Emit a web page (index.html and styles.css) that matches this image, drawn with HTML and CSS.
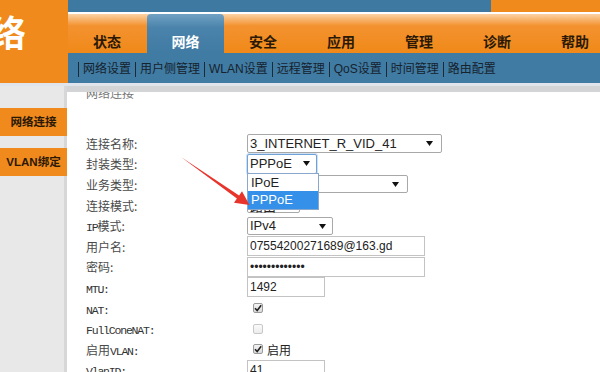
FILE: index.html
```html
<!DOCTYPE html>
<html lang="zh-CN">
<head>
    <meta charset="UTF-8">
    <title>网络连接</title>
    <link rel="stylesheet" href="styles.css">
</head>
<body>
    <div class="header">
        <div class="brand"><span>网络</span></div>
        <div class="head">
            <div class="topbar">
                <div class="topbar-blue"></div>
                <div class="topbar-orange"></div>
            </div>
            <ul class="tabs">
                <li>状态</li>
                <li class="on">网络</li>
                <li>安全</li>
                <li>应用</li>
                <li>管理</li>
                <li>诊断</li>
                <li>帮助</li>
            </ul>
            <div class="subnav">
                <a>网络设置</a>
                <a>用户侧管理</a>
                <a>WLAN设置</a>
                <a>远程管理</a>
                <a>QoS设置</a>
                <a>时间管理</a>
                <a>路由配置</a>
            </div>
        </div>
    </div>

    <div class="main">
        <div class="side">
            <div class="side-item">网络连接</div>
            <div class="side-item">VLAN绑定</div>
        </div>

        <div class="content">
            <div class="title">网络连接</div>

            <div class="form">
                <label>连接名称:</label>
                <div class="sel sel-name">3_INTERNET_R_VID_41<svg class="caret" width="7" height="5"><polygon points="0,0 7,0 3.5,5"/></svg></div>

                <label>封装类型:</label>
                <div class="sel sel-type focus">PPPoE<svg class="caret" width="7" height="5"><polygon points="0,0 7,0 3.5,5"/></svg>
                    <div class="drop">
                        <div>IPoE</div>
                        <div class="hl">PPPoE</div>
                    </div>
                </div>

                <label>业务类型:</label>
                <div class="sel sel-svc"><svg class="caret" width="7" height="5"><polygon points="0,0 7,0 3.5,5"/></svg></div>

                <label>连接模式:</label>
                <div class="sel sel-mode">路由</div>

                <label><span class="en">IP</span>模式:</label>
                <div class="sel sel-ip">IPv4<svg class="caret" width="7" height="5"><polygon points="0,0 7,0 3.5,5"/></svg></div>

                <label>用户名:</label>
                <input class="inp inp-long" type="text" value="07554200271689@163.gd">

                <label>密码:</label>
                <input class="inp inp-long" type="password" value="1234567890123">

                <label><span class="en">MTU:</span></label>
                <input class="inp inp-short" type="text" value="1492">

                <label><span class="en">NAT:</span></label>
                <span class="cb"><svg width="10" height="10"><path d="M2 5.2 L4.2 7.6 L8.2 2.2"/></svg></span>

                <label><span class="en">FullConeNAT:</span></label>
                <span class="cb off"></span>

                <label>启用<span class="en">VLAN:</span></label>
                <div class="check-row">
                    <span class="cb"><svg width="10" height="10"><path d="M2 5.2 L4.2 7.6 L8.2 2.2"/></svg></span>
                    <span>启用</span>
                </div>

                <label><span class="en">VlanID:</span></label>
                <input class="inp inp-short" type="text" value="41">
            </div>
        </div>
    </div>

    <!-- красная стрелка поверх формы -->
    <svg class="pointer" width="600" height="372">
        <polygon points="181,157 239.1,195.4 242,191.3 249.5,205 234,202.7 236.9,198.6"/>
    </svg>
</body>
</html>
```

FILE: styles.css
```css
body {
    margin: 0;
    width: 600px;
    height: 372px;
    overflow: hidden;
    position: relative;
    background-color: #fff;
    font-family: "Liberation Sans", "Noto Sans CJK SC", sans-serif;
}
.header {
    display: flex;
    height: 83px;
}
.brand {
    width: 68px;
    flex: none;
    background-color: #f08a1c;
    overflow: hidden;
    color: #fff;
    font-family: "Noto Sans CJK SC", sans-serif;
    font-weight: bold;
    font-size: 36px;
}
.brand span {
    display: block;
    white-space: nowrap;
    line-height: 40px;
    margin-left: -46px;
    margin-top: 11px;
}
.head {
    flex: 1;
    min-width: 0;
    overflow: hidden;
    display: flex;
    flex-direction: column;
}
.topbar {
    height: 12px;
    flex: none;
    display: flex;
    border-bottom: 2px solid #fff;
}
.topbar-blue {
    width: 423px;
    flex: none;
    background-color: #3e79a1;
}
.topbar-orange {
    flex: 1;
    background-color: #f08a1c;
}
.tabs {
    height: 39px;
    flex: none;
    margin: 0;
    padding: 0;
    list-style: none;
    display: flex;
    background: linear-gradient(#fcd2a4, #f39230 30%, #f08918);
}
.tabs li {
    width: 78px;
    flex: none;
    box-sizing: border-box;
    display: flex;
    align-items: flex-end;
    justify-content: center;
    padding-bottom: 4px;
    font-family: "Noto Sans CJK SC", sans-serif;
    font-weight: bold;
    font-size: 14px;
    line-height: 16px;
    color: #2b1905;
}
.tabs li.on {
    background: linear-gradient(#72a2c4, #4a83ab 35%, #407ba3);
    border-radius: 4px 4px 0 0;
    color: #fff;
    margin-left: 1px;
    width: 77px;
}
.subnav {
    height: 30px;
    flex: none;
    box-sizing: border-box;
    padding: 3px 0 0 10px;
    display: flex;
    align-items: center;
    background-color: #407ba3;
    font-family: "Liberation Sans", "Noto Sans CJK SC", sans-serif;
    font-size: 12px;
    color: #16222d;
    white-space: nowrap;
}
.subnav a {
    border-left: 1px solid #1c2a36;
    padding: 0 4px;
    line-height: 15px;
}
.main {
    display: flex;
    height: 289px;
    border-top: 3px solid #dfe5ea;
}
.side {
    width: 64px;
    flex: none;
    background-color: #e8e8e8;
    border-right: 3px solid #d7d7d7;
    padding-top: 22px;
}
.side-item {
    position: relative;
    margin-right: -3px;
    height: 28px;
    margin-bottom: 12px;
    background-color: #f08a1c;
    line-height: 28px;
    text-align: center;
    font-size: 11.5px;
    font-weight: bold;
    color: #2b1905;
}
.content {
    flex: 1;
    position: relative;
    overflow: hidden;
    border-top: 6px solid #d3d4d5;
    padding-left: 19px;
}
.title {
    margin-top: -6px;
    font-family: "Noto Sans CJK SC", sans-serif;
    font-size: 12px;
    line-height: 14px;
    color: #777;
}
.form {
    margin-top: 33px;
    display: grid;
    grid-template-columns: 161px auto;
    grid-auto-rows: 20.6px;
    align-items: center;
    justify-items: start;
}
.form label {
    font-family: "Noto Sans CJK SC", sans-serif;
    font-size: 12px;
    color: #4a4a4a;
}
.en {
    font-family: "Liberation Mono", monospace;
    font-size: 11.5px;
    letter-spacing: -1.2px;
    color: #333;
}
.sel {
    position: relative;
    box-sizing: border-box;
    height: 19px;
    display: flex;
    align-items: center;
    padding-left: 2px;
    border: 1px solid #a8a8a8;
    border-radius: 2px;
    background-color: #fff;
    font-size: 13px;
    color: #222;
}
.caret {
    position: absolute;
    right: 8px;
    top: 6px;
    fill: #111;
}
.sel-name { width: 195px; }
.sel-type { width: 70px; height: 20px; }
.sel-svc { width: 161px; height: 18px; }
.sel-mode { width: 53px; height: 16px; }
.sel-ip { width: 86px; height: 18px; }
.sel-type .caret { right: 6px; }
.sel-ip .caret { right: 6px; }
.sel.focus {
    border-color: #6fa3d8;
    box-shadow: 0 0 0 1px #cfe0f3;
}
.drop {
    position: absolute;
    left: -1px;
    top: 18px;
    width: 70px;
    z-index: 2;
    border: 1px solid #8aa8cc;
    background-color: #fff;
    font-size: 13px;
    color: #222;
}
.drop div {
    height: 17px;
    line-height: 17px;
    padding-left: 3px;
}
.drop .hl {
    height: 18px;
    background-color: #3490e8;
    color: #fff;
}
.inp {
    box-sizing: border-box;
    height: 20px;
    margin: 0;
    padding: 0 2px;
    border: 1px solid #c3c3c3;
    font-family: "Liberation Sans", sans-serif;
    font-size: 12px;
    color: #222;
}
.inp-long { width: 178px; }
.inp-short { width: 78px; }
.cb {
    box-sizing: border-box;
    width: 10px;
    height: 10px;
    margin-left: 6px;
    border: 1px solid #9a9a9a;
    border-radius: 2px;
    background: linear-gradient(#f4f4f4, #d9d9d9);
    display: flex;
}
.cb svg {
    margin: -1px;
}
.cb path {
    fill: none;
    stroke: #222;
    stroke-width: 1.6;
}
.cb.off {
    border-color: #c8c8c8;
    background: linear-gradient(#fafafa, #ececec);
}
.check-row {
    display: flex;
    align-items: center;
    gap: 4px;
    font-family: "Noto Sans CJK SC", sans-serif;
    font-size: 12px;
    color: #222;
}
.pointer {
    position: absolute;
    left: 0;
    top: 0;
    z-index: 5;
    pointer-events: none;
}
.pointer polygon {
    fill: #e8352c;
}
```
